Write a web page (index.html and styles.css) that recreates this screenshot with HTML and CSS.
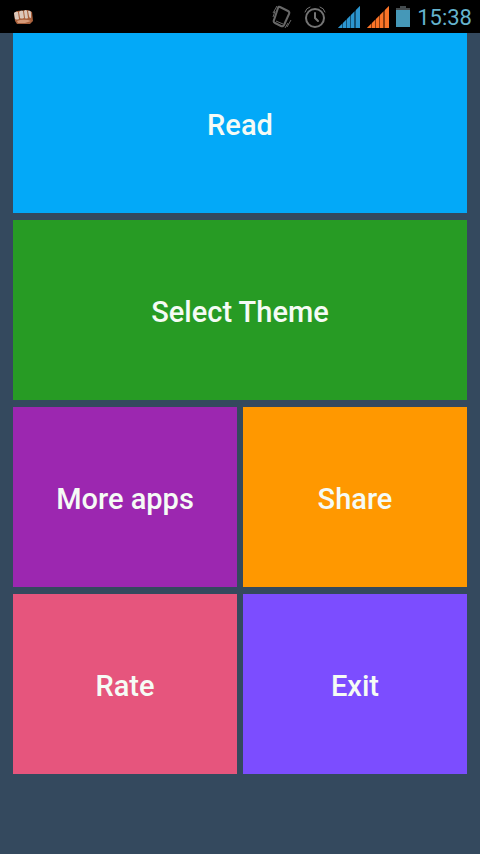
FILE: index.html
```
<!DOCTYPE html>
<html lang="en">
<head>
<meta charset="utf-8">
<meta name="viewport" content="width=device-width, initial-scale=1">
<title>Menu</title>
<link rel="stylesheet" href="styles.css">
</head>
<body>
<header class="status-bar">
  <svg class="notice" width="20" height="16" viewBox="0 0 20 16" aria-hidden="true">
    <path fill="#a8603c" d="M1 4L4 2L15 1L19 3L20 12L17 15L4 15L2 12Z"/>
    <path fill="#dcc8bb" d="M1 4Q3 2 5 3L6 10Q4 11 2 10ZM6 3Q8 1 10 2L11 9Q8 10 7 9ZM11 2Q13 0 14 2L15 9Q13 10 12 9ZM15 2Q18 1 18 4L18 9Q16 9 16 7Z"/>
    <path fill="#d69a78" d="M4 12Q8 10 15 11L18 12L12 14L5 14Z"/>
  </svg>
  <div class="indicators">
    <svg width="20" height="24" viewBox="0 0 20 24" fill="none" stroke="#686868" aria-hidden="true">
      <path stroke-width="2" d="M8 2L16 6Q18 7 17 9L12 20Q11 22 9 21L3 18Q1 17 2 15L6 3Q7 1 8 2Z"/>
      <path stroke-width="1" d="M1 8L5 1M1 12L3 6M15 22L19 15M13 23L16 18M4 16L11 19"/>
    </svg>
    <svg width="22" height="22" viewBox="0 0 22 22" fill="none" stroke="#747474" stroke-linecap="round" aria-hidden="true">
      <circle cx="11" cy="12" r="9" stroke-width="2"/>
      <path stroke-width="2" d="M11 7V12L14 15"/>
      <path stroke-width="1" d="M1 6Q2 2 6 1M21 6Q20 2 16 1"/>
    </svg>
    <div class="signals">
      <svg width="22" height="22" viewBox="0 0 22 22" aria-hidden="true">
        <path fill="#145174" d="M0 22L22 0V22Z"/>
        <path fill="#2c96d0" d="M0 22L4 18V22ZM5 17L8 14V22H5ZM9 13L12 10V22H9ZM13 9L16 6V22H13ZM18 4L22 0V22H18Z"/>
      </svg>
      <svg width="22" height="22" viewBox="0 0 22 22" aria-hidden="true">
        <path fill="#8b3c10" d="M0 22L22 0V22Z"/>
        <path fill="#fa7428" d="M0 22L4 18V22ZM5 17L8 14V22H5ZM9 13L12 10V22H9ZM13 9L16 6V22H13ZM18 4L22 0V22H18Z"/>
      </svg>
      <svg width="14" height="21" viewBox="0 0 14 21" aria-hidden="true">
        <path fill="#444b4e" d="M4 0H10V2H14V5H0V2H4Z"/>
        <path fill="#4598b8" d="M0 4H14V21H0Z"/>
      </svg>
      <time class="clock">15:38</time>
    </div>
  </div>
</header>
<main class="menu">
  <button class="tile wide read" type="button">Read</button>
  <button class="tile wide theme" type="button">Select Theme</button>
  <button class="tile more" type="button">More apps</button>
  <button class="tile share" type="button">Share</button>
  <button class="tile rate" type="button">Rate</button>
  <button class="tile exit" type="button">Exit</button>
</main>
</body>
</html>
```
FILE: styles.css
```
* { box-sizing: border-box; }

body {
  margin: 0;
  min-height: 100vh;
  background: #34495e;
  font-family: Roboto, sans-serif;
}

.status-bar {
  display: flex;
  align-items: center;
  justify-content: space-between;
  height: 33px;
  padding: 0 8px 0 13px;
  background: #000;
}

.indicators {
  display: flex;
  align-items: center;
  gap: 12px;
}

.signals {
  display: flex;
  align-items: center;
  gap: 7px;
}

.status-bar svg { display: block; }

.clock {
  padding-top: 2px;
  color: #65b3cd;
  font-size: 22px;
  line-height: 30px;
}

.menu {
  display: grid;
  grid-template-columns: 1fr 1fr;
  grid-auto-rows: 180px;
  gap: 7px 6px;
  padding: 0 13px 16px;
}

.tile {
  border: 0;
  padding: 4px 0 0;
  color: #f5fbf5;
  font: 500 29px/36px Roboto, sans-serif;
  cursor: pointer;
}

.wide { grid-column: 1 / -1; }
.read { background: #03a9f8; }
.theme { background: #279b24; }
.more { background: #9c27b0; }
.share { background: #ff9800; }
.rate { background: #e6557d; }
.exit { background: #7c4dff; }
```
